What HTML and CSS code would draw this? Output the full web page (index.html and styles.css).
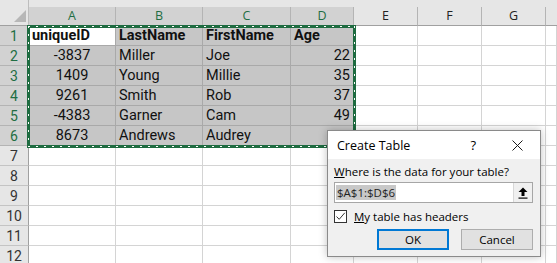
FILE: index.html
```html
<!DOCTYPE html>
<html lang="en">

<head>
    <meta charset="UTF-8">
    <meta name="viewport" content="width=device-width, initial-scale=1.0">
    <title>Create Table</title>
    <link rel="stylesheet" href="styles.css">
</head>

<body>
    <div class="sheet">
        <div class="corner"><i class="tri"></i></div>
        <div class="strip"></div>

        <div class="col-head sel">A</div>
        <div class="col-head sel">B</div>
        <div class="col-head sel">C</div>
        <div class="col-head sel">D</div>
        <div class="col-head">E</div>
        <div class="col-head">F</div>
        <div class="col-head">G</div>
        <div class="col-head last"></div>

        <!-- 1 -->
        <div class="row-head sel">1</div>
        <div class="cell active bold">uniqueID</div>
        <div class="cell sel bold">LastName</div>
        <div class="cell sel bold">FirstName</div>
        <div class="cell sel bold">Age</div>
        <div class="cell"></div><div class="cell"></div><div class="cell"></div><div class="cell"></div>

        <!-- 2 -->
        <div class="row-head sel">2</div>
        <div class="cell sel center">-3837</div>
        <div class="cell sel">Miller</div>
        <div class="cell sel">Joe</div>
        <div class="cell sel right">22</div>
        <div class="cell"></div><div class="cell"></div><div class="cell"></div><div class="cell"></div>

        <!-- 3 -->
        <div class="row-head sel">3</div>
        <div class="cell sel center">1409</div>
        <div class="cell sel">Young</div>
        <div class="cell sel">Millie</div>
        <div class="cell sel right">35</div>
        <div class="cell"></div><div class="cell"></div><div class="cell"></div><div class="cell"></div>

        <!-- 4 -->
        <div class="row-head sel">4</div>
        <div class="cell sel center">9261</div>
        <div class="cell sel">Smith</div>
        <div class="cell sel">Rob</div>
        <div class="cell sel right">37</div>
        <div class="cell"></div><div class="cell"></div><div class="cell"></div><div class="cell"></div>

        <!-- 5 -->
        <div class="row-head sel">5</div>
        <div class="cell sel center">-4383</div>
        <div class="cell sel">Garner</div>
        <div class="cell sel">Cam</div>
        <div class="cell sel right">49</div>
        <div class="cell"></div><div class="cell"></div><div class="cell"></div><div class="cell"></div>

        <!-- 6 -->
        <div class="row-head sel">6</div>
        <div class="cell sel center">8673</div>
        <div class="cell sel">Andrews</div>
        <div class="cell sel">Audrey</div>
        <div class="cell sel right"></div>
        <div class="cell"></div><div class="cell"></div><div class="cell"></div><div class="cell"></div>

        <div class="row-head">7</div>
        <div class="cell"></div><div class="cell"></div><div class="cell"></div><div class="cell"></div>
        <div class="cell"></div><div class="cell"></div><div class="cell"></div><div class="cell"></div>

        <div class="row-head">8</div>
        <div class="cell"></div><div class="cell"></div><div class="cell"></div><div class="cell"></div>
        <div class="cell"></div><div class="cell"></div><div class="cell"></div><div class="cell"></div>

        <div class="row-head">9</div>
        <div class="cell"></div><div class="cell"></div><div class="cell"></div><div class="cell"></div>
        <div class="cell"></div><div class="cell"></div><div class="cell"></div><div class="cell"></div>

        <div class="row-head">10</div>
        <div class="cell"></div><div class="cell"></div><div class="cell"></div><div class="cell"></div>
        <div class="cell"></div><div class="cell"></div><div class="cell"></div><div class="cell"></div>

        <div class="row-head">11</div>
        <div class="cell"></div><div class="cell"></div><div class="cell"></div><div class="cell"></div>
        <div class="cell"></div><div class="cell"></div><div class="cell"></div><div class="cell"></div>

        <div class="row-head">12</div>
        <div class="cell"></div><div class="cell"></div><div class="cell"></div><div class="cell"></div>
        <div class="cell"></div><div class="cell"></div><div class="cell"></div><div class="cell"></div>

        <!-- marching ants round A1:D6 -->
        <div class="ants"></div>
    </div>

    <div class="dialog">
        <div class="dlg-title">
            <span class="dlg-name">Create Table</span>
            <span class="help">?</span>
            <svg class="close" width="11" height="11" viewBox="0 0 11 11">
                <path d="M0.5 0.5 L10.5 10.5 M10.5 0.5 L0.5 10.5" stroke="#1a1a1a" stroke-width="1" fill="none" />
            </svg>
        </div>
        <div class="dlg-body">
            <div class="dlg-label"><u>W</u>here is the data for your table?</div>
            <div class="range-box">
                <span class="range-text">$A$1:$D$6</span>
                <span class="collapse">
                    <svg width="10" height="12" viewBox="0 0 10 12">
                        <path d="M5 0.5 L9.5 5 L6.5 5 L6.5 9 L3.5 9 L3.5 5 L0.5 5 Z" fill="#000" />
                        <rect x="0.5" y="10.5" width="9" height="1.2" fill="#000" />
                    </svg>
                </span>
            </div>
            <div class="check-row">
                <span class="check">
                    <svg width="11" height="11" viewBox="0 0 11 11">
                        <path d="M1.5 5.5 L4.2 8.3 L9.8 1.8" stroke="#333" stroke-width="1" fill="none" />
                    </svg>
                </span>
                <span><u>M</u>y table has headers</span>
            </div>
            <div class="buttons">
                <button class="btn primary">OK</button>
                <button class="btn">Cancel</button>
            </div>
        </div>
    </div>
</body>

</html>
```

FILE: styles.css
```css
* {
    box-sizing: border-box;
}

body {
    margin: 0;
    width: 557px;
    height: 263px;
    overflow: hidden;
    background: #fff;
    position: relative;
    font-family: Roboto, "Liberation Sans", sans-serif;
}

.sheet {
    position: relative;
    display: grid;
    grid-template-columns: 29px 87px 87px 88px 63px 64px 64px 64px 1fr;
    grid-template-rows: 7px 19px repeat(12, 20px);
}

.corner {
    grid-row: 1 / 3;
    background: #e6e6e6;
    border-right: 1px solid #bdbdbd;
    border-bottom: 1px solid #a0a0a0;
    display: flex;
    justify-content: flex-end;
    align-items: flex-end;
    padding: 0 2px 3px 0;
}

.tri {
    width: 0;
    height: 0;
    border-left: 12px solid transparent;
    border-bottom: 12px solid #b7b7b7;
}

.strip {
    grid-column: 2 / 10;
    background: #e6e6e6;
}

.col-head {
    background: #e6e6e6;
    border-right: 1px solid #b4b4b4;
    border-bottom: 1px solid #a0a0a0;
    display: flex;
    align-items: center;
    justify-content: center;
    font-family: "Open Sans", "Liberation Sans", sans-serif;
    font-size: 12.5px;
    color: #222;
    padding-bottom: 1px;
}

.col-head.sel {
    background: #d2d2d2;
    color: #1f6e43;
}

.col-head.last {
    border-right: none;
}

.row-head {
    background: #e6e6e6;
    border-right: 1px solid #a0a0a0;
    border-bottom: 1px solid #c4c4c4;
    display: flex;
    align-items: center;
    justify-content: center;
    font-size: 14px;
    color: #333;
}

.row-head.sel {
    background: #d2d2d2;
    color: #1f6e43;
    border-bottom-color: #b4b4b4;
}

.cell {
    border-right: 1px solid #d4d4d4;
    border-bottom: 1px solid #d4d4d4;
    display: flex;
    align-items: center;
    padding: 0 3px;
    font-size: 14.5px;
    color: #111;
    white-space: nowrap;
    overflow: hidden;
}

.cell.sel {
    background: #c6c6c6;
    border-color: #a9a9a9;
}

.cell.active {
    background: #fff;
    border-color: #a9a9a9;
}

.cell.bold {
    font-weight: bold;
}

.cell.center {
    justify-content: center;
}

.cell.right {
    justify-content: flex-end;
}

.ants {
    position: absolute;
    left: 27px;
    top: 25px;
    width: 329px;
    height: 123px;
    border: 3px solid #1e6b40;
    pointer-events: none;
}

/* 白色虚线点在绿框中间 */
.ants::after {
    content: "";
    position: absolute;
    inset: -2px;
    background:
        repeating-linear-gradient(90deg, #fff 0 2px, transparent 2px 8px) top / 100% 1px no-repeat,
        repeating-linear-gradient(90deg, #fff 0 2px, transparent 2px 8px) bottom / 100% 1px no-repeat,
        repeating-linear-gradient(180deg, #fff 0 2px, transparent 2px 8px) left / 1px 100% no-repeat,
        repeating-linear-gradient(180deg, #fff 0 2px, transparent 2px 8px) right / 1px 100% no-repeat;
}

/* 对话框 */
.dialog {
    position: absolute;
    left: 327px;
    top: 130px;
    width: 214px;
    height: 127px;
    background: #f0f0f0;
    border: 1px solid #8a8a8a;
    box-shadow: 0 0 8px rgba(0, 0, 0, 0.25);
    font-family: "Open Sans", "Noto Sans", sans-serif;
    color: #000;
}

.dlg-title {
    height: 28px;
    background: #fff;
    display: flex;
    align-items: center;
    padding: 0 17px 0 9px;
    font-size: 12.5px;
}

.dlg-name {
    flex: 1;
}

.help {
    margin-right: 36px;
    font-size: 13px;
}

.dlg-body {
    padding: 5px 7px 0 6px;
    font-size: 11.5px;
}

.dlg-label {
    height: 18px;
    line-height: 16px;
}

.range-box {
    height: 21px;
    background: #fff;
    border: 1px solid #a6a6a6;
    display: flex;
    align-items: center;
    padding-left: 1px;
}

.range-text {
    background: #c8c8c8;
    color: #222;
    line-height: 15px;
    padding: 0 1px;
    margin-right: auto;
}

.collapse {
    width: 19px;
    height: 19px;
    background: #f0f0f0;
    border-left: 1px solid #d8d8d8;
    display: flex;
    align-items: center;
    justify-content: center;
}

.check-row {
    display: flex;
    align-items: center;
    height: 20px;
    margin-top: 3px;
    gap: 7px;
}

.check {
    width: 13px;
    height: 13px;
    background: #fff;
    border: 1px solid #333;
    display: flex;
    align-items: center;
    justify-content: center;
}

.buttons {
    display: flex;
    justify-content: flex-end;
    gap: 12px;
    margin-top: 3px;
}

.btn {
    width: 72px;
    height: 21px;
    background: #e1e1e1;
    border: 1px solid #adadad;
    font-family: "Open Sans", "Noto Sans", sans-serif;
    font-size: 11.5px;
    color: #000;
    padding: 0;
}

.btn.primary {
    border: 2px solid #0078d4;
}
```
